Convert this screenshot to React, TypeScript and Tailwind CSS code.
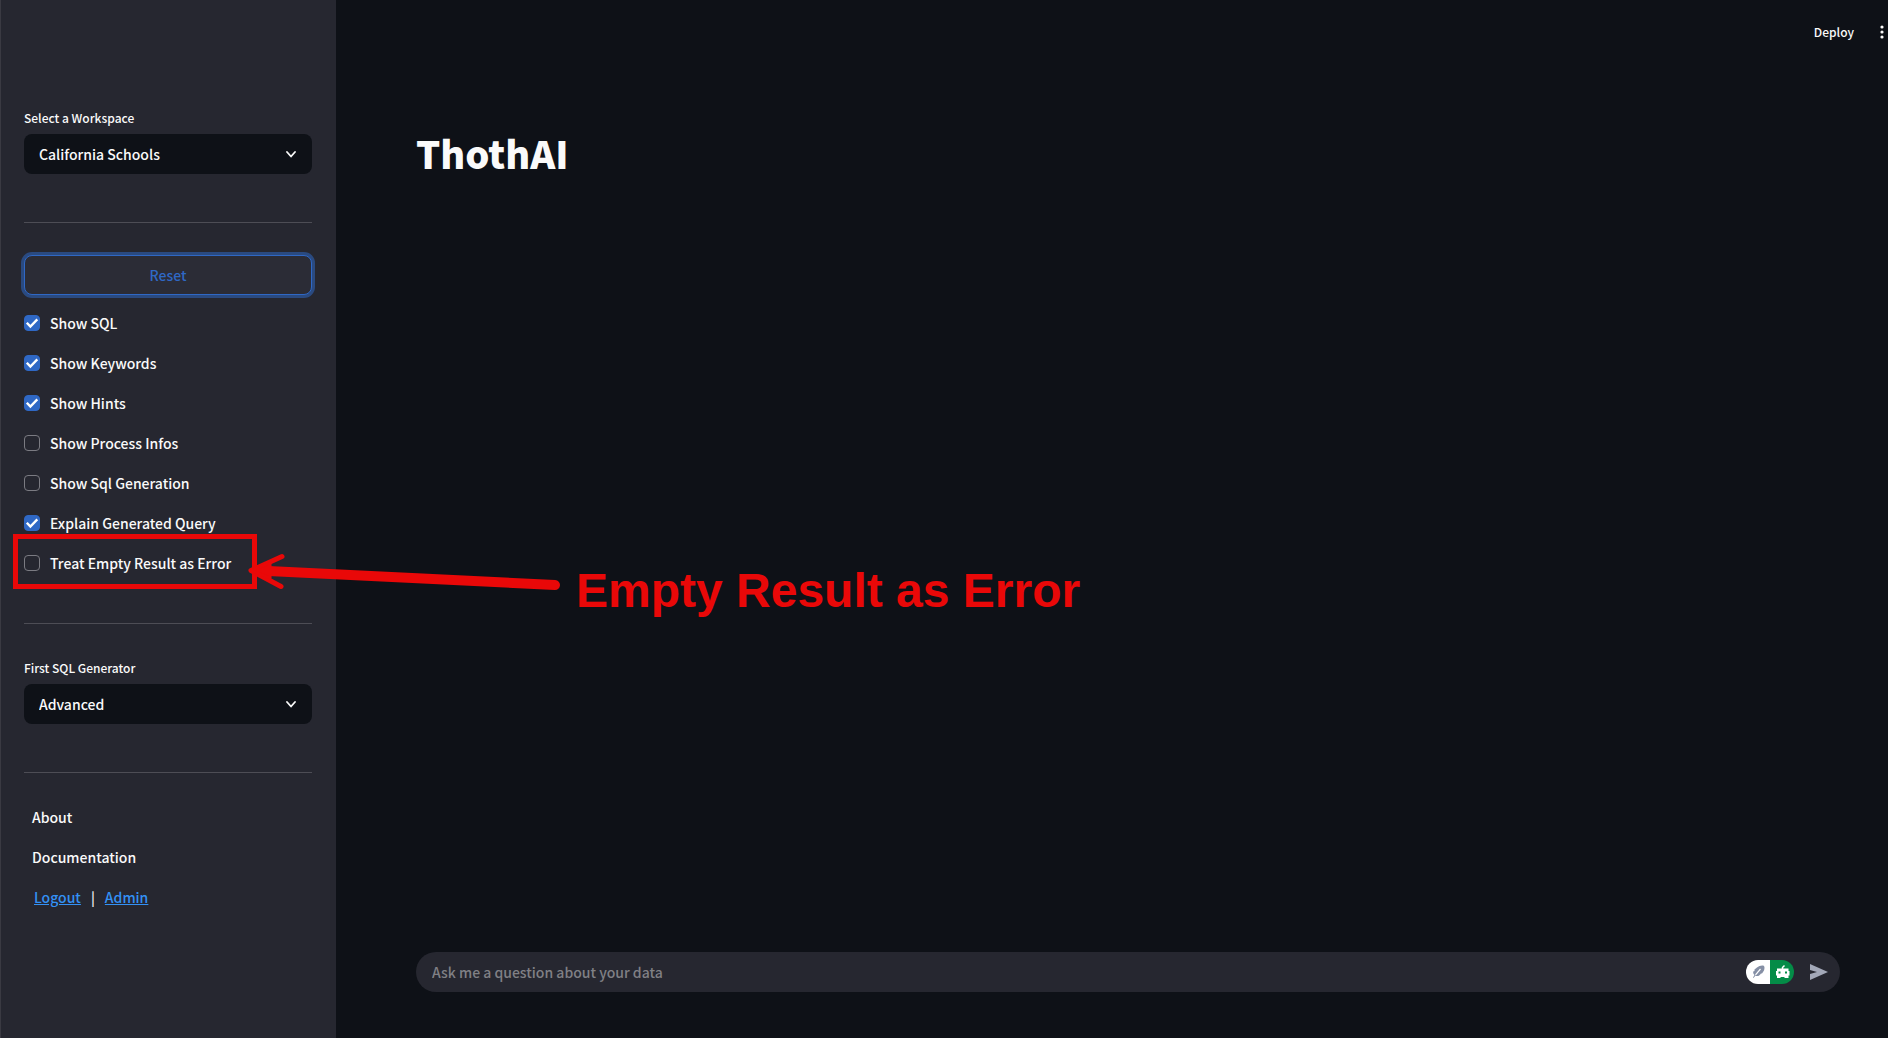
import { useState } from "react";

const checks = [
  { label: "Show SQL", on: true },
  { label: "Show Keywords", on: true },
  { label: "Show Hints", on: true },
  { label: "Show Process Infos", on: false },
  { label: "Show Sql Generation", on: false },
  { label: "Explain Generated Query", on: true },
  { label: "Treat Empty Result as Error", on: false, marked: true },
];

function Select({ id, label, options }: { id: string; label: string; options: string[] }) {
  return (
    <div className="flex flex-col gap-1">
      <label htmlFor={id} className="text-xs leading-6 font-medium">
        {label}
      </label>
      <div className="relative">
        <select
          id={id}
          className="block h-10 w-full appearance-none rounded-lg bg-[#0e1117] pr-10 pl-[15px] text-sm leading-6 font-medium outline-none"
        >
          {options.map((o) => (
            <option key={o}>{o}</option>
          ))}
        </select>
        <svg viewBox="0 0 10 7" className="pointer-events-none absolute top-[17px] right-4 h-[7px] w-[10px]" fill="none" stroke="#fafafa" strokeWidth="1.8" strokeLinecap="round" strokeLinejoin="round">
          <path d="M1 1l4 4.500L9 1" />
        </svg>
      </div>
    </div>
  );
}

function Check({ label, on, marked }: { label: string; on: boolean; marked?: boolean }) {
  const [checked, setChecked] = useState(on);
  return (
    <div className="relative flex h-6 items-center">
      <label className="flex items-center gap-[10px] text-sm leading-6 font-medium">
        <span className="relative flex h-4 w-4">
          <input
            type="checkbox"
            checked={checked}
            onChange={() => setChecked(!checked)}
            className="peer h-4 w-4 appearance-none rounded border border-[#7b7b82] checked:border-[#2f68c5] checked:bg-[#2f68c5]"
          />
          <svg viewBox="0 0 16 16" className="pointer-events-none absolute inset-0 hidden h-4 w-4 peer-checked:block" fill="none" stroke="#fff" strokeWidth="2.4">
            <path d="M2.8 7.7l3.6 3.9 6.9-7.2" />
          </svg>
        </span>
        {label}
      </label>
      {marked && <div className="pointer-events-none absolute -top-[17px] -left-[11px] h-[55px] w-[244px] border-5 border-[#e90808]" />}
    </div>
  );
}

function Divider() {
  return <hr className="my-8 border-t border-[#4d4d55]" />;
}

export default function App() {
  return (
    <div className="relative flex min-h-screen bg-[#0e1117] font-['Noto_Sans_CJK_SC','Noto_Sans',sans-serif] text-[#fafafa]">
      <aside className="w-[336px] shrink-0 border-l border-[#3a3a42] bg-[#262730] pt-[106px] pr-6 pl-[23px]">
        <Select id="workspace" label="Select a Workspace" options={["California Schools"]} />
        <div className="h-4" />
        <Divider />
        <button className="h-10 w-full rounded-lg border border-[#2f68c5] bg-[#2b2c36] text-sm leading-6 font-medium text-[#2f68c5] ring-3 ring-[#2a4a80]">
          Reset
        </button>
        <div className="mt-4 flex flex-col gap-4">
          {checks.map((c) => (
            <Check key={c.label} {...c} />
          ))}
        </div>
        <div className="h-4" />
        <Divider />
        <Select id="generator" label="First SQL Generator" options={["Advanced"]} />
        <div className="h-4" />
        <Divider />
        <nav className="flex flex-col items-start gap-4 pl-2 text-sm leading-6 font-medium">
          <a href="#about">About</a>
          <a href="#documentation">Documentation</a>
          <div className="flex gap-[10px] pl-0.5">
            <a href="#logout" className="text-[#3391f5] underline">Logout</a>
            <span>|</span>
            <a href="#admin" className="text-[#3391f5] underline">Admin</a>
          </div>
        </nav>
      </aside>

      <main className="flex min-w-0 flex-1 flex-col">
        <header className="flex h-16 items-center justify-end gap-[26px] pr-1">
          <button className="text-xs leading-6 font-medium">Deploy</button>
          <button aria-label="Menu" className="flex w-1 justify-center">
            <svg viewBox="0 0 4 14" className="h-[14px] w-1" fill="#fafafa">
              <circle cx="2" cy="2" r="1.6" />
              <circle cx="2" cy="7" r="1.6" />
              <circle cx="2" cy="12" r="1.6" />
            </svg>
          </button>
        </header>
        <h1 className="mt-16 flex-1 pl-20 text-[38px] leading-[50px] font-black">ThothAI</h1>
        <form className="mr-12 mb-[46px] ml-20 flex h-10 items-center rounded-full bg-[#262730] pr-3 pl-4" onSubmit={(e) => e.preventDefault()}>
          <input
            type="text"
            aria-label="Question"
            placeholder="Ask me a question about your data"
            className="min-w-0 flex-1 bg-transparent text-sm leading-6 font-medium outline-none placeholder:text-[#808085]"
          />
          <div className="flex h-6 w-12 overflow-hidden rounded-full">
            <button type="button" aria-label="Writing assistant" className="h-6 w-6 bg-white">
              <svg viewBox="0 0 24 24" className="h-6 w-6">
                <path d="M7.500 18L9.500 15.500C11 16.500 13 16 14 14.800L15 13.500H16L18 10.500C18.500 9 18.800 7 18 6C16.500 5 13 5.800 11 7.500L8.500 9.500V11L7.200 11.500C7 13 7.500 14 8.500 15L7 17.500Z" fill="#858fa5" />
                <path d="M9.500 14.800L14.500 9" stroke="#fff" strokeWidth="1.2" />
              </svg>
            </button>
            <button type="button" aria-label="Robot assistant" className="h-6 w-6 bg-[#048c47]">
              <svg viewBox="0 0 24 24" className="h-6 w-6">
                <path d="M12.500 9V7.500L14.500 5.500" stroke="#fff" strokeWidth="1.500" fill="none" />
                <path d="M7 8.500H18.500V11H19.500V15.500H18.500V18H7V15.500H6V11H7Z" fill="#fff" />
                <path d="M8.500 11.500h2v2h-2zM15 11.500h2v2h-2zM10.500 17h4v1.200h-4z" fill="#048c47" />
              </svg>
            </button>
          </div>
          <button aria-label="Send" className="ml-4 h-4 w-[18px]">
            <svg viewBox="0 0 18 16" className="h-4 w-[18px]" fill="#a3a8b8">
              <path d="M0 0L18 8L0 16V10L7 8L0 6Z" />
            </svg>
          </button>
        </form>
      </main>

      <svg viewBox="0 0 320 50" className="pointer-events-none absolute top-[546px] left-[244px] h-[50px] w-[320px]" fill="none" stroke="#e90808" strokeLinecap="round" strokeLinejoin="round">
        <path d="M14 24.500L311 39" strokeWidth="10" />
        <path d="M38 10.500L7 24.500L37 40.500" strokeWidth="5" />
        <path d="M7 24.500L26 17V32Z" fill="#e90808" strokeWidth="3" />
      </svg>
      <p className="pointer-events-none absolute top-[563px] left-[576px] font-['Liberation_Sans',sans-serif] text-[48px] leading-14 font-bold whitespace-nowrap text-[#e90808]">
        Empty Result as Error
      </p>
    </div>
  );
}
